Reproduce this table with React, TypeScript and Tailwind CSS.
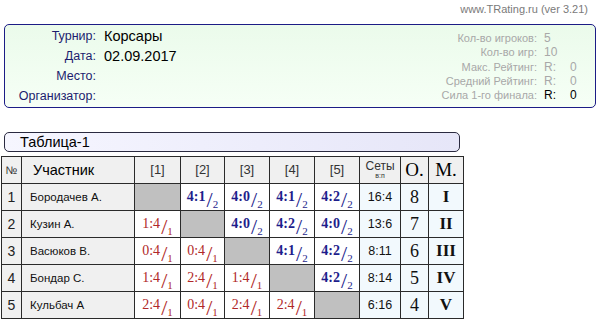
import React from "react";

type Cell = { s: string; sub: string; win: boolean } | null;

const rows: { n: number; name: string; cells: Cell[]; sets: string; o: string; m: string }[] = [
  {
    n: 1,
    name: "Бородачев А.",
    cells: [null, { s: "4:1", sub: "2", win: true }, { s: "4:0", sub: "2", win: true }, { s: "4:1", sub: "2", win: true }, { s: "4:2", sub: "2", win: true }],
    sets: "16:4",
    o: "8",
    m: "I",
  },
  {
    n: 2,
    name: "Кузин А.",
    cells: [{ s: "1:4", sub: "1", win: false }, null, { s: "4:0", sub: "2", win: true }, { s: "4:2", sub: "2", win: true }, { s: "4:0", sub: "2", win: true }],
    sets: "13:6",
    o: "7",
    m: "II",
  },
  {
    n: 3,
    name: "Васюков В.",
    cells: [{ s: "0:4", sub: "1", win: false }, { s: "0:4", sub: "1", win: false }, null, { s: "4:1", sub: "2", win: true }, { s: "4:2", sub: "2", win: true }],
    sets: "8:11",
    o: "6",
    m: "III",
  },
  {
    n: 4,
    name: "Бондар С.",
    cells: [{ s: "1:4", sub: "1", win: false }, { s: "2:4", sub: "1", win: false }, { s: "1:4", sub: "1", win: false }, null, { s: "4:2", sub: "2", win: true }],
    sets: "8:14",
    o: "5",
    m: "IV",
  },
  {
    n: 5,
    name: "Кульбач А",
    cells: [{ s: "2:4", sub: "1", win: false }, { s: "0:4", sub: "1", win: false }, { s: "2:4", sub: "1", win: false }, { s: "2:4", sub: "1", win: false }, null],
    sets: "6:16",
    o: "4",
    m: "V",
  },
];

const sans = "font-['Liberation_Sans',Arial,sans-serif]";
const serif = "font-['Liberation_Serif','Times_New_Roman',serif]";

function Score({ c }: { c: Cell }) {
  if (!c) return null;
  const color = c.win ? "text-[#1e1e8c]" : "text-[#b02828]";
  return (
    <div className={`flex items-start justify-center h-[25px] ${serif} ${color}`}>
      <span className={`text-[14px] leading-[14px] mt-[5px] ${c.win ? "font-bold" : "font-normal"}`}>{c.s}</span>
      <span className="text-[22px] leading-[22px] mt-[4px] ml-[1px]">/</span>
      <span className="text-[11px] leading-[11px] mt-[14px]">{c.sub}</span>
    </div>
  );
}

export default function App() {
  const stats: [string, React.ReactNode, boolean][] = [
    ["Кол-во игроков:", "5", false],
    ["Кол-во игр:", "10", false],
    ["Макс. Рейтинг:", <R key="a" />, false],
    ["Средний Рейтинг:", <R key="b" />, false],
    ["Сила 1-го финала:", <R key="c" />, true],
  ];
  const th = "border border-[#2a2a2a] bg-[#f0f0f0] p-0 font-normal h-[27px] leading-[20px]";
  const td = "border border-[#2a2a2a] p-0 h-[27px] leading-[20px]";
  return (
    <div className={`w-[600px] h-[319px] bg-white overflow-hidden ${sans}`}>
      <div className="h-[24px] flex justify-end items-start pr-[12px] pt-[3px] text-[11px] leading-[13px] text-[#7a7a7a]">
        www.TRating.ru (ver 3.21)
      </div>
      <div className="mx-[4px] w-[592px] h-[84px] border border-[#1c1c86] rounded-[5px] bg-gradient-to-b from-[#ebfbeb] to-[#f6fff6] flex justify-between">
        <div className="pt-[2px]">
          {[
            ["Турнир:", "Корсары"],
            ["Дата:", "02.09.2017"],
            ["Место:", ""],
            ["Организатор:", ""],
          ].map(([l, v]) => (
            <div key={l} className="flex items-center h-[19.7px]">
              <div className="w-[91px] text-right text-[12.5px] text-[#1c1c6e]">{l}</div>
              <div className="ml-[8px] text-[14.5px] text-black">{v}</div>
            </div>
          ))}
        </div>
        <div className="pt-[6px]">
          {stats.map(([l, v, dark]) => (
            <div key={l} className="flex items-center h-[14.3px] text-[11px] leading-[14px]">
              <div className="w-[120px] text-right text-[#a8a8a8]">{l}</div>
              <div className={`ml-[7px] w-[51px] text-[12px] ${dark ? "text-black" : "text-[#a8a8a8]"}`}>{v}</div>
            </div>
          ))}
        </div>
      </div>
      <div className="mt-[24px] ml-[4px] w-[456px] h-[20px] border border-[#2a2a40] rounded-[5px] bg-gradient-to-r from-[#f6f6ff] to-[#e6e6f8] flex items-center pl-[15px] text-[14.5px] leading-[18px] text-black">
        Таблица-1
      </div>
      <table className="mt-[4px] ml-[1px] table-fixed border-collapse w-[462px]">
        <thead>
          <tr>
            <th className={`${th} w-[20px] text-[11px] text-[#333]`}>№</th>
            <th className={`${th} w-[113px] text-left pl-[11px] text-[14.5px] text-black`}>Участник</th>
            {[1, 2, 3, 4, 5].map((i) => (
              <th key={i} className={`${th} ${i === 1 ? "w-[46px]" : i === 2 ? "w-[44px]" : "w-[45px]"} text-[13px] text-[#333]`}>
                [{i}]
              </th>
            ))}
            <th className={`${th} w-[41px] text-[#333]`}>
              <div className="text-[12px] leading-[12px]">Сеты</div>
              <div className="text-[7px] leading-[8px]">в:п</div>
            </th>
            <th className={`${th} w-[28px] ${serif} text-[19px] text-black`}>О.</th>
            <th className={`${th} w-[35px] ${serif} text-[19px] text-black`}>М.</th>
          </tr>
        </thead>
        <tbody>
          {rows.map((r) => (
            <tr key={r.n}>
              <td className={`${td} bg-[#f0f0f0] text-center text-[14px] text-[#222]`}>{r.n}</td>
              <td className={`${td} bg-[#f0f0f0] pl-[8px] text-[11.5px] text-[#111]`}>{r.name}</td>
              {r.cells.map((c, i) => (
                <td key={i} className={`${td} ${c ? "bg-white" : "bg-[#c0c0c0]"}`}>
                  <Score c={c} />
                </td>
              ))}
              <td className={`${td} bg-[#f2f9fd] text-center text-[12.5px] text-[#111]`}>{r.sets}</td>
              <td className={`${td} bg-[#f2f9fd] text-center ${serif} text-[18px] text-[#111]`}>{r.o}</td>
              <td className={`${td} bg-[#f2f9fd] text-center ${serif} font-bold text-[17px] text-[#111]`}>{r.m}</td>
            </tr>
          ))}
        </tbody>
      </table>
    </div>
  );
}

function R() {
  return (
    <span>
      <span className="inline-block w-[26px]">R:</span>0
    </span>
  );
}
